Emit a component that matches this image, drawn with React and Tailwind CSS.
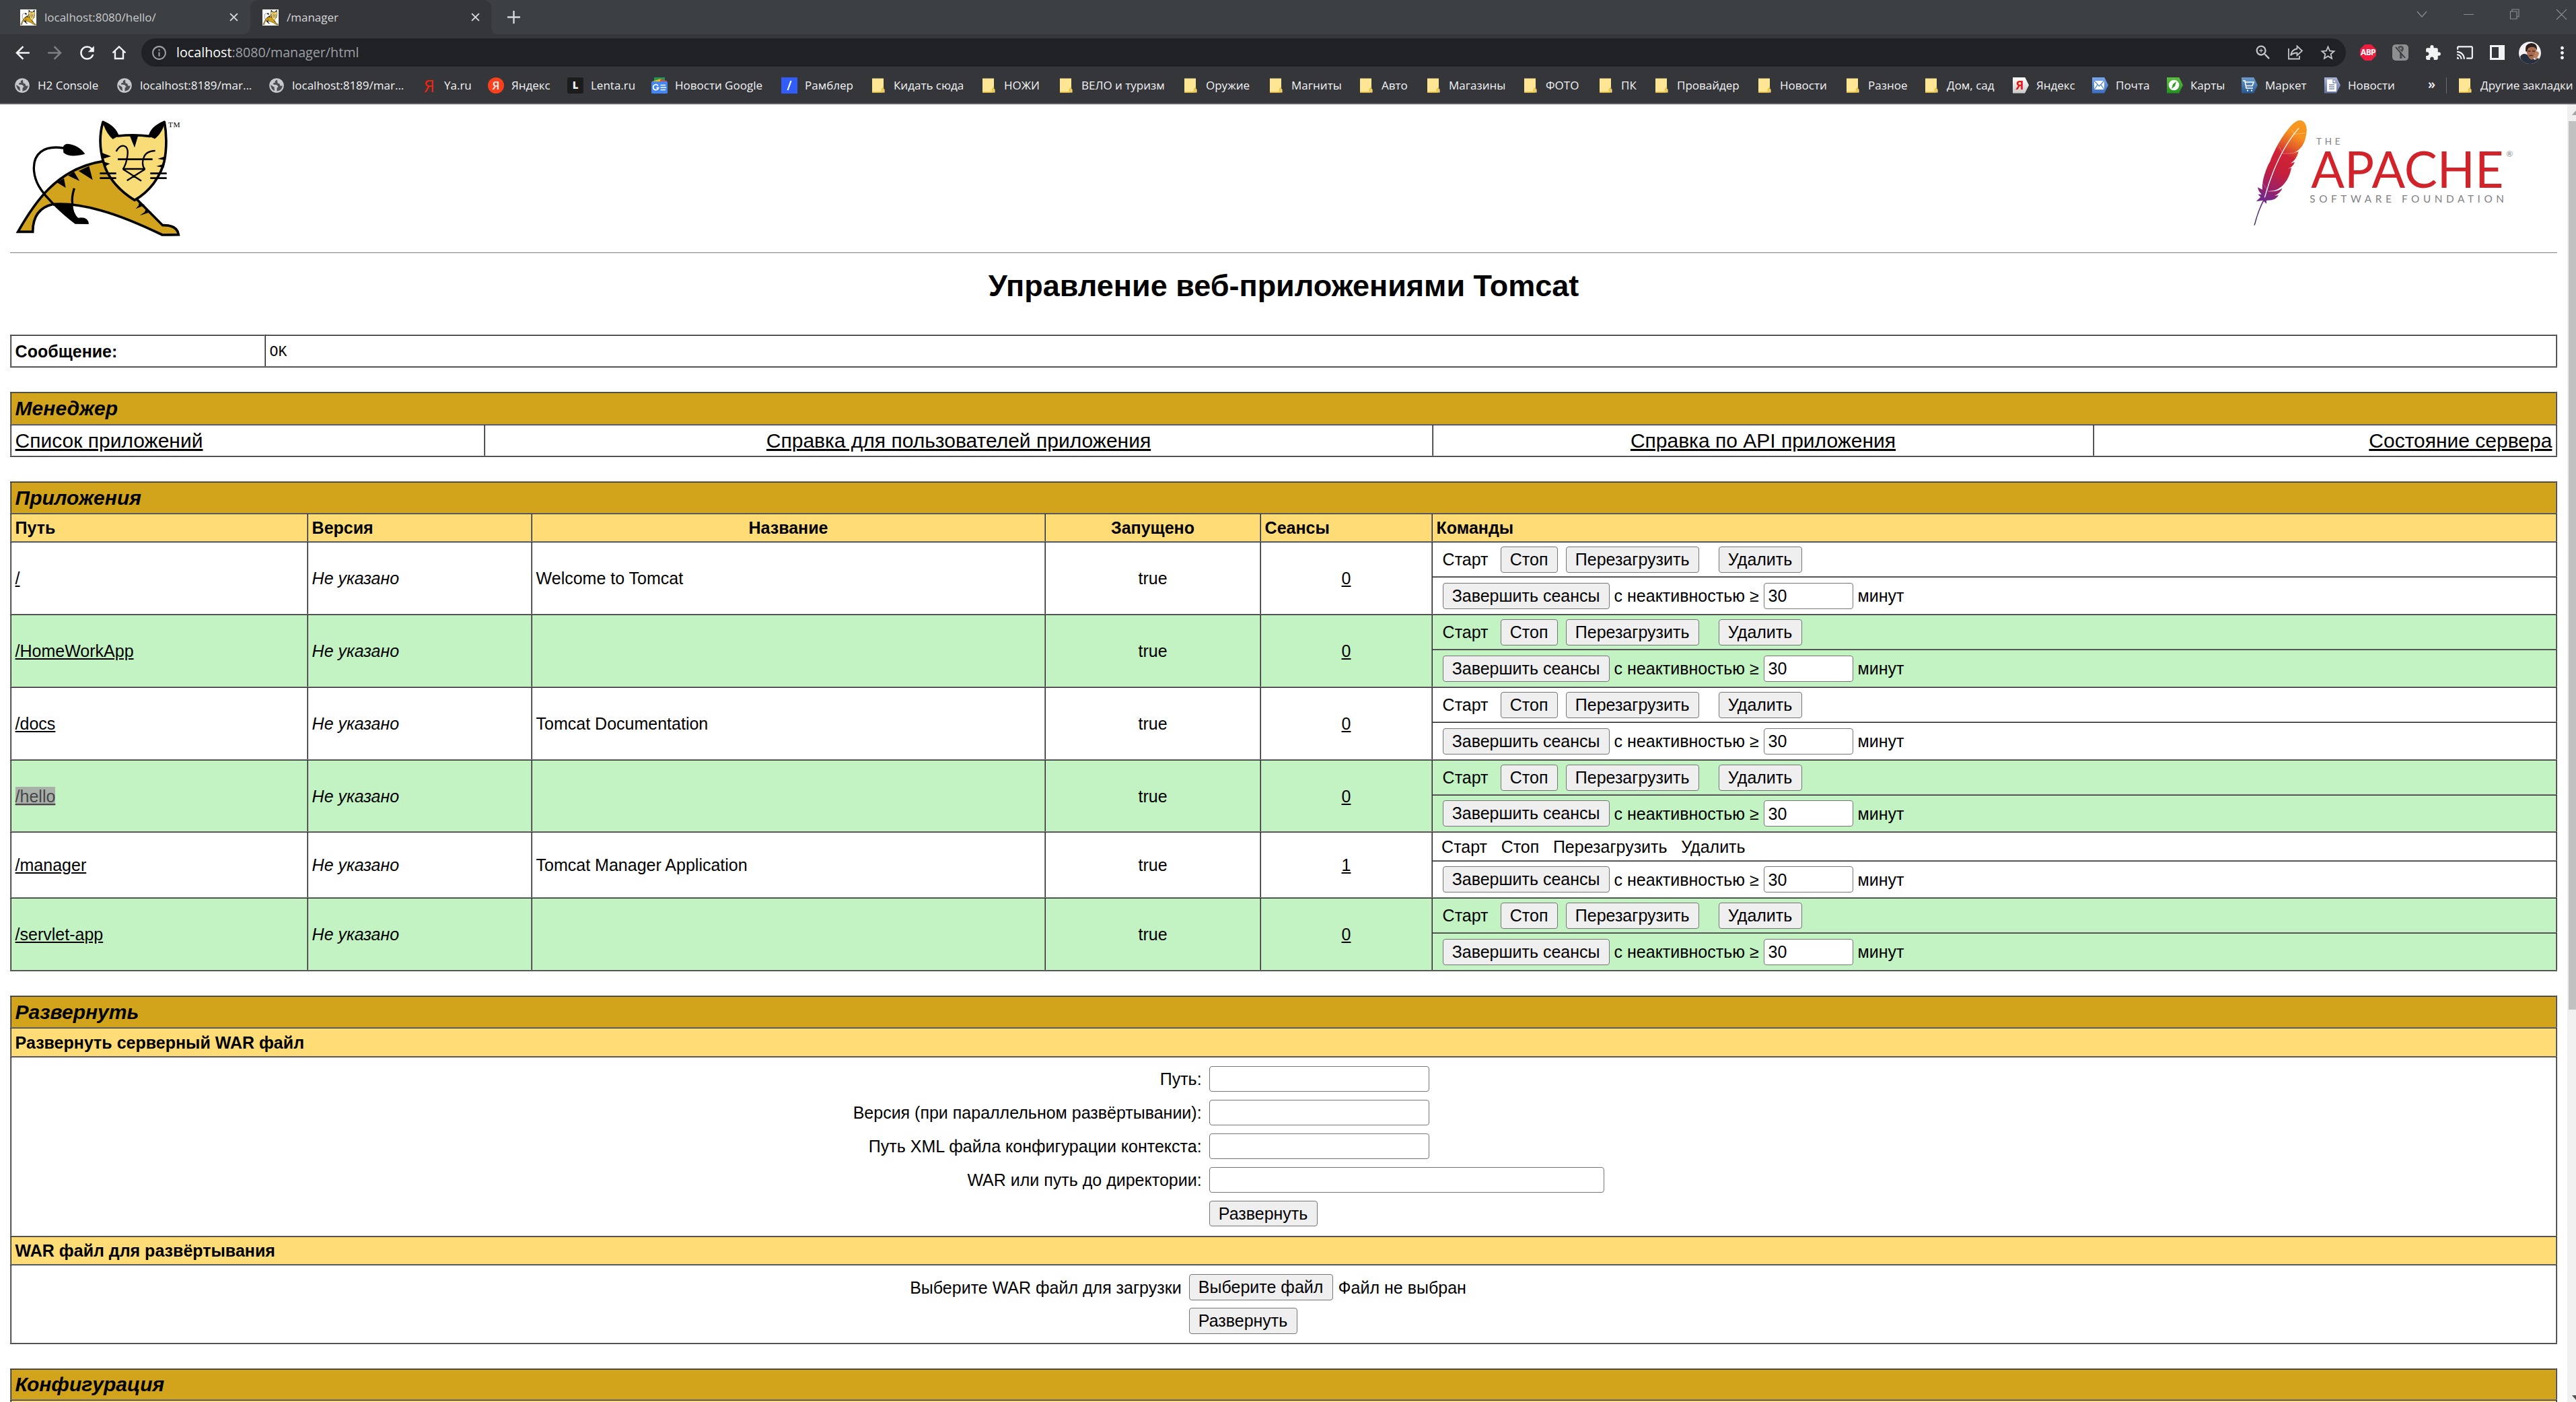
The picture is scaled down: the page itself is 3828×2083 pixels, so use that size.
import React from "react";
import {
  MdArrowBack,
  MdArrowForward,
  MdRefresh,
  MdInfoOutline,
  MdZoomIn,
  MdStarOutline,
  MdExtension,
  MdCast,
  MdMoreVert,
} from "react-icons/md";

const CELL = "border-2 border-[gray] [border-style:ridge] px-[5.6px] py-0";

/* ---------- logos ---------- */

function Tomcat({ className, tm = true }) {
  return (
    <svg className={className} viewBox={tm ? "0 0 900 600" : "55 40 760 550"} preserveAspectRatio="none">
      <path
        d="M283 180C190 165 150 210 151 270C152 330 180 370 242 434"
        fill="none"
        stroke="#000"
        strokeWidth="10"
      />
      <path d="M281 176Q285 163 300 161Q350 165 379 206Q310 225 283 200Z" />
      <path
        d="M80 553C150 430 250 270 462 238L600 398L725 524Q790 522 796 566L724 567Q560 488 450 458Q330 424 238 430Q146 450 146 553Z"
        fill="#D2A41E"
        stroke="#000"
        strokeWidth="11"
      />
      <path d="M196 384L242 434" stroke="#000" strokeWidth="10" />
      <path d="M236 428L325 427Q325 470 348 491Q394 484 396 519L335 518Q290 485 238 434Z" />
      <path d="M331 359Q318 400 323 430" fill="none" stroke="#000" strokeWidth="10" />
      <path d="M255 334L285 314L293 357ZM303 302L330 286L355 327ZM350 282L397 260L413 322Z" />
      <path d="M620 418L645 434L605 451L618 436ZM650 453L674 464L623 481L644 466Z" />
      <path
        d="M459 64C440 130 447 200 465 255C485 320 540 375 600 412C665 375 715 310 732 240C745 180 742 110 733 64Q680 90 668 127Q600 118 525 126Q510 85 459 64Z"
        fill="#F8DC78"
        stroke="#000"
        strokeWidth="11"
        strokeLinejoin="round"
      />
      <path d="M458 58Q520 85 527 127L503 140Q478 120 462 78Z" />
      <path d="M734 58Q668 85 663 127L690 139Q715 120 728 88Z" />
      <path d="M578 124L616 124L600 178Z" />
      <path d="M453 200L495 217L458 228ZM460 240L490 250L467 262ZM741 215L703 228L736 234ZM735 250L697 261L730 268Z" />
      <path
        d="M445 293H518M445 314H518M670 293H743M670 314H743M525 230H680"
        stroke="#000"
        strokeWidth="8"
      />
      <path
        d="M518 195Q532 168 550 170Q576 174 567 222Q562 252 549 273M692 192Q648 194 640 225Q630 255 645 273M546 273H648M550 275L630 326M645 275L566 325"
        fill="none"
        stroke="#000"
        strokeWidth="7"
      />
      {tm && (
        <text x="750" y="87" fontSize="34" fontFamily="Liberation Serif, serif" textLength="53">
          TM
        </text>
      )}
    </svg>
  );
}

function Apache() {
  return (
    <svg className="h-[180px] w-[420px]" viewBox="0 0 1260 540">
      <defs>
        <linearGradient id="feather" gradientUnits="userSpaceOnUse" x1="240" y1="41" x2="60" y2="410">
          <stop offset="0" stopColor="#F79A23" />
          <stop offset="0.17" stopColor="#F5921F" />
          <stop offset="0.3" stopColor="#E3602A" />
          <stop offset="0.42" stopColor="#CE2336" />
          <stop offset="0.6" stopColor="#C7203C" />
          <stop offset="0.82" stopColor="#9B2168" />
          <stop offset="0.9" stopColor="#7E2680" />
          <stop offset="1" stopColor="#6A2C8C" />
        </linearGradient>
        <linearGradient id="quill" x1="0" y1="0" x2="0" y2="1">
          <stop offset="0" stopColor="#7E2680" />
          <stop offset="1" stopColor="#282662" />
        </linearGradient>
      </defs>
      <path
        d="M235 41C262 44 268 80 260 112C254 148 235 174 205 187L227 180C221 205 207 225 190 234L210 227C204 245 190 254 178 257L195 253C187 300 160 342 118 355L93 358L122 357Q142 354 155 343Q146 368 120 377L138 375Q126 400 84 398L84 413L68 398L38 403L58 383L46 371L62 371Q48 358 45 340L66 350C62 322 78 262 100 225C128 150 180 70 214 48Q224 41 235 41Z"
        fill="url(#feather)"
      />
      <path d="M71 392Q46 440 28 510L33 508Q50 440 77 394Z" fill="url(#quill)" />
      <path d="M228 76Q130 190 76 385" fill="none" stroke="#fff" strokeWidth="4" />
      <path
        d="M196 82L208 103L258 98M140 156L158 190L208 187M66 320L92 358L122 356"
        fill="none"
        stroke="#fff"
        strokeOpacity="0.45"
        strokeWidth="2"
      />
      <g fontFamily="Lato, sans-serif">
        <text x="306" y="149" fontSize="40" fill="#808285" textLength="106">
          THE
        </text>
        <text x="283" y="342" fontSize="226" fill="#D2232A" textLength="858" lengthAdjust="spacingAndGlyphs">
          APACHE
        </text>
        <text x="277" y="409" fontSize="46" fill="#808285" textLength="866">
          SOFTWARE FOUNDATION
        </text>
        <text x="1153" y="203" fontSize="36" fill="#808285">
          ®
        </text>
      </g>
    </svg>
  );
}

/* ---------- browser chrome ---------- */

function Close({ className }) {
  return (
    <svg className={className} viewBox="0 0 12 12" stroke="#d5d7d9" strokeWidth="1.8">
      <path d="M1 1L11 11M11 1L1 11" />
    </svg>
  );
}

function Favicon() {
  return (
    <span className="flex h-6 w-6 items-center bg-white">
      <Tomcat className="h-6 w-6" tm={false} />
    </span>
  );
}

function TabStrip() {
  return (
    <div className="flex h-[51px] bg-[#3c4043] text-[17px] text-[#c8cacc]">
      <div className="flex w-[360px] items-center pl-[30px]">
        <Favicon />
        <span className="ml-[12px] w-[275px]">localhost:8080/hello/</span>
        <Close className="h-[13px] w-[13px]" />
      </div>
      <svg className="h-[51px] w-[12px]" viewBox="0 0 12 51">
        <path d="M0 51Q12 51 12 39V51Z" fill="#35363a" />
      </svg>
      <div className="flex w-[358px] items-center rounded-t-[12px] bg-[#35363a] pl-[18px]">
        <Favicon />
        <span className="ml-[12px] w-[274px] text-[#d5d7d9]">/manager</span>
        <Close className="h-[13px] w-[13px]" />
      </div>
      <svg className="h-[51px] w-[12px]" viewBox="0 0 12 51">
        <path d="M12 51Q0 51 0 39V51Z" fill="#35363a" />
      </svg>
      <svg className="mt-[16px] ml-[12px] h-[19px] w-[19px]" viewBox="0 0 19 19" stroke="#d5d7d9" strokeWidth="2.4">
        <path d="M9.5 0V19M0 9.5H19" />
      </svg>
      <svg
        className="mt-[12px] mr-[13px] ml-auto h-[18px] w-[224px]"
        viewBox="0 0 224 18"
        fill="none"
        stroke="#8b8d90"
        strokeWidth="1.2"
      >
        <path d="M1 5L8 13L15 5M70 9.500H85M139.500 5H149V16H139.500ZM142 5V2H152V13H149M208 2L223 17M223 2L208 17" />
      </svg>
    </div>
  );
}

function Slot({ children, className = "" }) {
  return <span className={"flex h-[42px] w-12 shrink-0 items-center justify-center " + className}>{children}</span>;
}

function Toolbar() {
  return (
    <div className="flex h-[54px] bg-[#35363a] pt-[6px] text-[#f1f3f4]">
      <div className="flex w-[210px] shrink-0 pl-[9px]">
        <Slot>
          <MdArrowBack size={31} />
        </Slot>
        <Slot className="text-[#7e7f82]">
          <MdArrowForward size={31} />
        </Slot>
        <Slot>
          <MdRefresh size={31} />
        </Slot>
        <Slot>
          <svg className="h-[22px] w-[22px]" viewBox="0 0 22 22" fill="none" stroke="currentColor" strokeWidth="2.4">
            <path d="M5 9V20H17V9M1.500 11.500L11 2.500L20.500 11.500" />
          </svg>
        </Slot>
      </div>
      <div className="flex h-[42px] w-[3276px] shrink-0 items-center rounded-full bg-[#202124] pr-[3px] pl-[14px] text-[#c4c7c9]">
        <MdInfoOutline size={25} className="text-[#9aa0a6]" />
        <span className="ml-[13px] text-[19.7px] text-[#9aa0a6]">
          <span className="text-white">localhost</span>:8080/manager/html
        </span>
        <Slot className="ml-auto">
          <MdZoomIn size={28} />
        </Slot>
        <Slot>
          <svg className="h-[24px] w-[24px]" viewBox="0 0 24 24" fill="none" stroke="currentColor" strokeWidth="1.800">
            <path d="M2 6V21.500H18V17M14.500 2.500L22 9.500L14.500 16.500V12.500Q8 12.500 5 16.500Q6.500 7.500 14.500 6.500Z" />
          </svg>
        </Slot>
        <Slot>
          <MdStarOutline size={27} />
        </Slot>
      </div>
      <div className="ml-[9px] flex">
        <Slot>
          <span className="flex h-6 w-6 items-center justify-center bg-[#ee1c3f] text-[12px] font-bold tracking-[-0.6px] text-white [clip-path:polygon(30%_0,70%_0,100%_30%,100%_70%,70%_100%,30%_100%,0_70%,0_30%)]">
            ABP
          </span>
        </Slot>
        <Slot>
          <svg className="h-6 w-6" viewBox="0 0 24 24">
            <rect width="24" height="24" rx="5" fill="#8e8f91" />
            <circle cx="12.500" cy="6.500" r="4.500" fill="#4a4b4e" />
            <circle cx="12.500" cy="6" r="1.500" fill="#8e8f91" />
            <path d="M11 10H14.500V21H11Z" fill="#4a4b4e" />
            <path d="M6.500 4L20 19" stroke="#8e8f91" strokeWidth="1.600" />
            <path d="M5 4L19 20" stroke="#35363a" strokeWidth="1.800" />
          </svg>
        </Slot>
        <Slot>
          <MdExtension size={25} />
        </Slot>
        <Slot>
          <MdCast size={26} />
        </Slot>
        <Slot>
          <svg className="h-[22px] w-[22px]" viewBox="0 0 22 22">
            <path fill="currentColor" fillRule="evenodd" d="M0 0H22V22H0ZM3 3V19H13V3Z" />
          </svg>
        </Slot>
        <Slot>
          <svg className="h-[33px] w-[33px]" viewBox="0 0 33 33">
            <defs>
              <clipPath id="face">
                <circle cx="16.500" cy="16.500" r="16.500" />
              </clipPath>
            </defs>
            <g clipPath="url(#face)">
              <rect width="33" height="33" fill="#f4f3f2" />
              <path d="M2 22Q6 16 12 19L24 27Q31 20 32 33H4Z" fill="#27303f" />
              <path d="M11 10Q11 4 19 4Q26 5 26 13Q26 23 19 27Q12 24 11 10Z" fill="#a86c50" />
              <path d="M10 14Q9 3 18 2Q28 2 27 13Q25 7 18 8Q13 8 12 15Z" fill="#2c211d" />
              <path d="M13.500 14H17.500M20 14H24M15.500 21Q18.500 19.500 21 21" stroke="#4c2a20" strokeWidth="1.400" fill="none" />
              <path d="M25 14Q30 14 30 18L26 27L22 23Z" fill="#bd8062" />
            </g>
          </svg>
        </Slot>
        <Slot>
          <MdMoreVert size={29} />
        </Slot>
      </div>
    </div>
  );
}

function Globe() {
  return (
    <svg className="h-6 w-6" viewBox="0 0 24 24">
      <circle cx="12" cy="12" r="10.800" fill="#c6c8cb" />
      <path
        d="M13 3.500L9.500 5.500L10 8H7.500L7 10.500L12 11L14.500 13.500L12.500 16V20.500Q20.500 19 20.800 12Q19 13.500 17 12L16.500 9.500L13.500 8.500Z"
        fill="#4a4c50"
      />
      <path d="M3.200 11L8.500 14.500L9 20Q3.500 17.500 3.200 11Z" fill="#4a4c50" />
    </svg>
  );
}

function Folder() {
  return (
    <svg className="h-6 w-6" viewBox="0 0 24 24">
      <path d="M3 1.500H20V16.500L21.500 18V22.500H3Z" fill="#ffe694" />
      <path d="M3 22H17.500V17.500L19.500 15.500V22" fill="none" stroke="#e8bd3c" strokeWidth="1.400" />
    </svg>
  );
}

function Arrowed({ from, to, children }) {
  return (
    <span
      className={
        "flex h-6 w-6 items-center justify-center bg-linear-to-b pr-[3px] [clip-path:polygon(0_0,75%_0,100%_50%,75%_100%,0_100%)] " +
        from +
        " " +
        to
      }
    >
      {children}
    </span>
  );
}

const icons = {
  globe: <Globe />,
  folder: <Folder />,
  ya: <span className="w-6 pl-[5px] text-[25px] leading-6 text-[#f8230f]">Я</span>,
  yandex: (
    <span className="flex h-6 w-6 items-center justify-center rounded-full bg-[#fc3f1d] text-[17px] font-semibold">
      Я
    </span>
  ),
  lenta: (
    <span className="flex h-6 w-6 items-center justify-center rounded-[3px] bg-[#1c1c1c] text-[15px] font-extrabold">
      L
    </span>
  ),
  gnews: (
    <svg className="h-6 w-6" viewBox="0 0 24 24">
      <path d="M4 0H20V8H4Z" fill="#1e9a55" />
      <path d="M1 6L14 2L16 8H1Z" fill="#fbbc04" />
      <path d="M13 3L23 5L22 9H13Z" fill="#ea4335" />
      <rect y="6" width="24" height="18" rx="1.500" fill="#4285f4" />
      <path d="M13.500 11.500H21M13.500 15H22M13.500 18.500H21" stroke="#fff" strokeWidth="1.700" />
      <path d="M10 12.500A4 4 0 1 0 10.500 15.500H7.500" fill="none" stroke="#fff" strokeWidth="1.800" />
    </svg>
  ),
  rambler: (
    <svg className="h-6 w-6" viewBox="0 0 24 24">
      <rect width="24" height="24" fill="#315efb" />
      <path d="M14.500 5L9.500 19" stroke="#fff" strokeWidth="2.200" />
    </svg>
  ),
  y: (
    <Arrowed from="from-[#ffffff]" to="to-[#c9c9c9]">
      <span className="text-[18px] font-bold text-[#e61a1a]">Я</span>
    </Arrowed>
  ),
  mail: (
    <Arrowed from="from-[#7aa7ef]" to="to-[#3a6cc4]">
      <svg className="h-[13px] w-[15px]" viewBox="0 0 15 13">
        <rect width="15" height="13" fill="#fff" />
        <path d="M0 0L7.500 8L15 0M0 13L5 6M15 13L10 6" fill="none" stroke="#5d8bd8" strokeWidth="1.300" />
      </svg>
    </Arrowed>
  ),
  maps: (
    <Arrowed from="from-[#5cc040]" to="to-[#1f8f1f]">
      <svg className="h-[17px] w-[17px]" viewBox="0 0 17 17">
        <circle cx="8.500" cy="8.500" r="7.800" fill="#fff" />
        <path d="M12 3L10 10L5 14L7 7Z" fill="#35a02c" />
      </svg>
    </Arrowed>
  ),
  market: (
    <Arrowed from="from-[#6a9ccc]" to="to-[#23568f]">
      <svg className="h-[19px] w-[19px]" viewBox="0 0 19 19" fill="none" stroke="#fff" strokeWidth="1.600">
        <path d="M1 3H4L6 14H16M5 5H17L15 10.500H6" />
        <path d="M7 17.500H9M13 17.500H15" strokeWidth="2.200" />
      </svg>
    </Arrowed>
  ),
  news: (
    <Arrowed from="from-[#a9b3d2]" to="to-[#64719f]">
      <svg className="h-[18px] w-[14px]" viewBox="0 0 14 18">
        <path d="M0 0H9L14 5V18H0Z" fill="#fff" />
        <path d="M3 8H11M3 11H11M3 14H11M9 0V5H14" fill="none" stroke="#7e8ab3" strokeWidth="1.300" />
      </svg>
    </Arrowed>
  ),
};

const bookmarks = [
  ["globe", "H2 Console", "w-[152px]"],
  ["globe", "localhost:8189/mar...", "w-[226px]"],
  ["globe", "localhost:8189/mar...", "w-[226px]"],
  ["ya", "Ya.ru", "w-[100px]"],
  ["yandex", "Яндекс", "w-[118px]"],
  ["lenta", "Lenta.ru", "w-[125px]"],
  ["gnews", "Новости Google", "w-[193px]"],
  ["rambler", "Рамблер", "w-[132px]"],
  ["folder", "Кидать сюда", "w-[164px]"],
  ["folder", "НОЖИ", "w-[115px]"],
  ["folder", "ВЕЛО и туризм", "w-[185px]"],
  ["folder", "Оружие", "w-[127px]"],
  ["folder", "Магниты", "w-[134px]"],
  ["folder", "Авто", "w-[100px]"],
  ["folder", "Магазины", "w-[144px]"],
  ["folder", "ФОТО", "w-[112px]"],
  ["folder", "ПК", "w-[83px]"],
  ["folder", "Провайдер", "w-[153px]"],
  ["folder", "Новости", "w-[131px]"],
  ["folder", "Разное", "w-[117px]"],
  ["folder", "Дом, сад", "w-[133px]"],
  ["y", "Яндекс", "w-[118px]"],
  ["mail", "Почта", "w-[111px]"],
  ["maps", "Карты", "w-[111px]"],
  ["market", "Маркет", "w-[123px]"],
  ["news", "Новости", "w-[146px]"],
];

function Bookmark({ icon, label, width }) {
  return (
    <span className={"flex shrink-0 items-center gap-[11px] whitespace-nowrap " + width}>
      {icons[icon]}
      <span>{label}</span>
    </span>
  );
}

function Bookmarks() {
  return (
    <div className="flex h-[50px] items-center border-b-2 border-[#5f6164] bg-[#35363a] pb-[5px] pl-[21px] text-[17px] text-[#f1f3f4]">
      {bookmarks.map(([icon, label, width], i) => (
        <Bookmark key={i} icon={icon} label={label} width={width} />
      ))}
      <span className="w-[27px] shrink-0 pb-[4px] pl-[8px] text-[20px] leading-6 font-semibold">»</span>
      <span className="mr-[15px] ml-[8px] h-6 w-px shrink-0 bg-[#6a6c6f]" />
      <Bookmark icon="folder" label="Другие закладки" width="w-[177px]" />
    </div>
  );
}

/* ---------- manager page ---------- */

function Button({ children, className = "" }) {
  return (
    <button
      className={
        "flex h-[39px] shrink-0 items-center justify-center rounded-[4px] border border-[#767676] bg-[#efefef] leading-none whitespace-nowrap " +
        className
      }
    >
      {children}
    </button>
  );
}

function Table({ children, className = "" }) {
  return (
    <table
      className={
        "w-[3785px] table-fixed border-collapse border-2 border-[gray] text-[25px] leading-[30px] [border-style:ridge] " +
        className
      }
    >
      {children}
    </table>
  );
}

function TitleRow({ children, span }) {
  return (
    <tr className="h-[47px] bg-[#D2A41C]">
      <td colSpan={span} className={CELL + " text-[30px] font-bold italic"}>
        {children}
      </td>
    </tr>
  );
}

function Expire() {
  return (
    <div className="flex items-center pl-[9px]">
      <Button className="w-[248px]">Завершить сеансы</Button>
      <span className="ml-[7px] w-[222px] whitespace-nowrap">с неактивностью ≥</span>
      <span className="flex h-[39px] w-[133px] items-center rounded-[4px] border border-[#767676] bg-white pl-[6px]">
        30
      </span>
      <span className="ml-[7px]">минут</span>
    </div>
  );
}

const apps = [
  ["/", "Welcome to Tomcat", "0", "h-[56px]"],
  ["/HomeWorkApp", "", "0", "h-[56px]"],
  ["/docs", "Tomcat Documentation", "0", "h-[56px]"],
  ["/hello", "", "0", "h-[55px]"],
  ["/manager", "Tomcat Manager Application", "1", "h-[55px]"],
  ["/servlet-app", "", "0", "h-[56px]"],
];

function AppRows({ app, odd }) {
  const [path, title, sessions, expireHeight] = app;
  const own = path === "/manager";
  const bg = odd ? "bg-[#C3F3C3]" : "bg-white";
  return (
    <>
      <tr className={(own ? "h-[43px] " : "h-[52px] ") + bg}>
        <td rowSpan={2} className={CELL}>
          <a className={path === "/hello" ? "bg-[#a9b0a9] text-[#474747] underline" : "underline"}>{path}</a>
        </td>
        <td rowSpan={2} className={CELL + " italic"}>
          Не указано
        </td>
        <td rowSpan={2} className={CELL}>
          {title}
        </td>
        <td rowSpan={2} className={CELL + " text-center"}>
          true
        </td>
        <td rowSpan={2} className={CELL + " text-center"}>
          <a className="underline">{sessions}</a>
        </td>
        <td className={CELL}>
          {own ? (
            <div className="flex gap-[20.6px] pl-[7.5px]">
              <span>Старт</span>
              <span>Стоп</span>
              <span>Перезагрузить</span>
              <span>Удалить</span>
            </div>
          ) : (
            <div className="flex items-center pl-[9px]">
              <span className="w-[86px]">Старт</span>
              <Button className="w-[85px]">Стоп</Button>
              <Button className="ml-[12px] w-[198px]">Перезагрузить</Button>
              <Button className="ml-[29px] w-[124px]">Удалить</Button>
            </div>
          )}
        </td>
      </tr>
      <tr className={expireHeight + " " + bg}>
        <td className={CELL}>
          <Expire />
        </td>
      </tr>
    </>
  );
}

function Field({ label, wide }) {
  return (
    <>
      <span className="text-right">{label}</span>
      <input
        className={
          (wide ? "w-[587px]" : "w-[327px]") + " h-[38px] rounded-[4px] border border-[#767676] bg-white"
        }
      />
    </>
  );
}

function Page() {
  return (
    <main className="h-[1928px] w-[3815px] overflow-hidden bg-white pl-[15px] font-['Liberation_Sans',Arial,sans-serif] text-black">
      <header className="flex h-[221px] w-[3785px] items-start justify-between border-b border-[#808080]">
        <Tomcat className="-ml-[15px] mt-[5px] h-[200px] w-[300px]" />
        <div className="mt-[10px] mr-[40px]">
          <Apache />
        </div>
      </header>
      <h1 className="mt-[23px] h-[98px] w-[3785px] text-center text-[45px] leading-[52px] font-bold">
        Управление веб-приложениями Tomcat
      </h1>

      <Table>
        <colgroup>
          <col className="w-[378px]" />
          <col />
        </colgroup>
        <tbody>
          <tr className="h-[47px]">
            <td className={CELL + " font-bold"}>Сообщение:</td>
            <td className={CELL + " pt-[2px] font-['Liberation_Mono',monospace] text-[21.5px]"}>OK</td>
          </tr>
        </tbody>
      </Table>

      <Table className="mt-[36px]">
        <colgroup>
          <col className="w-[704px]" />
          <col className="w-[1409px]" />
          <col className="w-[982px]" />
          <col />
        </colgroup>
        <tbody>
          <tr className="h-[48px] bg-[#D2A41C]">
            <td colSpan={4} className={CELL + " text-[30px] font-bold italic"}>
              Менеджер
            </td>
          </tr>
          <tr className="h-[47px] text-[30px]">
            <td className={CELL}>
              <a className="underline">Список приложений</a>
            </td>
            <td className={CELL + " text-center"}>
              <a className="underline">Справка для пользователей приложения</a>
            </td>
            <td className={CELL + " text-center"}>
              <a className="underline">Справка по API приложения</a>
            </td>
            <td className={CELL + " text-right"}>
              <a className="underline">Состояние сервера</a>
            </td>
          </tr>
        </tbody>
      </Table>

      <Table className="mt-[36px]">
        <colgroup>
          <col className="w-[441px]" />
          <col className="w-[333px]" />
          <col className="w-[763px]" />
          <col className="w-[320px]" />
          <col className="w-[255px]" />
          <col />
        </colgroup>
        <tbody>
          <TitleRow span={6}>Приложения</TitleRow>
          <tr className="h-[42px] bg-[#FFDC75] font-bold">
            <td className={CELL}>Путь</td>
            <td className={CELL}>Версия</td>
            <td className={CELL + " text-center"}>Название</td>
            <td className={CELL + " text-center"}>Запущено</td>
            <td className={CELL}>Сеансы</td>
            <td className={CELL}>Команды</td>
          </tr>
          {apps.map((app, i) => (
            <AppRows key={app[0]} app={app} odd={i % 2 === 1} />
          ))}
        </tbody>
      </Table>

      <Table className="mt-[36px]">
        <tbody>
          <TitleRow>Развернуть</TitleRow>
          <tr className="h-[43px] bg-[#FFDC75] font-bold">
            <td className={CELL}>Развернуть серверный WAR файл</td>
          </tr>
          <tr className="h-[267px]">
            <td className={CELL + " align-top"}>
              <div className="grid grid-cols-[1763px_1fr] items-center gap-x-[11px] gap-y-[12px] pt-[13px]">
                <Field label="Путь:" />
                <Field label="Версия (при параллельном развёртывании):" />
                <Field label="Путь XML файла конфигурации контекста:" />
                <Field label="WAR или путь до директории:" wide />
                <span />
                <Button className="h-[38px]! w-[161px]">Развернуть</Button>
              </div>
            </td>
          </tr>
          <tr className="h-[42px] bg-[#FFDC75] font-bold">
            <td className={CELL}>WAR файл для развёртывания</td>
          </tr>
          <tr className="h-[117px]">
            <td className={CELL + " align-top"}>
              <div className="grid grid-cols-[1733px_1fr] items-center gap-x-[11px] gap-y-[11px] pt-[13px]">
                <span className="text-right">Выберите WAR файл для загрузки</span>
                <span className="flex items-center">
                  <Button className="w-[214px]">Выберите файл</Button>
                  <span className="ml-[8px]">Файл не выбран</span>
                </span>
                <span />
                <Button className="w-[161px]">Развернуть</Button>
              </div>
            </td>
          </tr>
        </tbody>
      </Table>

      <Table className="mt-[36px]">
        <tbody>
          <tr className="h-[46px] bg-[#D2A41C]">
            <td className={CELL + " text-[30px] font-bold italic"}>Конфигурация</td>
          </tr>
          <tr className="h-[43px] bg-[#FFDC75]">
            <td className={CELL} />
          </tr>
        </tbody>
      </Table>
    </main>
  );
}

function Scrollbar() {
  return (
    <div className="flex w-[13px] flex-col overflow-hidden bg-[#f0f0f0]">
      <svg className="h-[25px] w-[13px]" viewBox="0 0 13 25">
        <path d="M7 16L13 9V16Z" fill="#a3a3a3" />
      </svg>
      <div className="ml-[2px] h-[1320px] bg-[#c1c1c1]" />
      <svg className="mt-auto h-[25px] w-[13px]" viewBox="0 0 13 25">
        <path d="M7 15L13 22V15Z" fill="#505050" />
      </svg>
    </div>
  );
}

export default function App() {
  return (
    <div className="h-[2083px] w-[3828px] overflow-hidden bg-white font-['Open_Sans','Noto_Sans',sans-serif]">
      <TabStrip />
      <Toolbar />
      <Bookmarks />
      <div className="flex h-[1928px]">
        <Page />
        <Scrollbar />
      </div>
    </div>
  );
}
